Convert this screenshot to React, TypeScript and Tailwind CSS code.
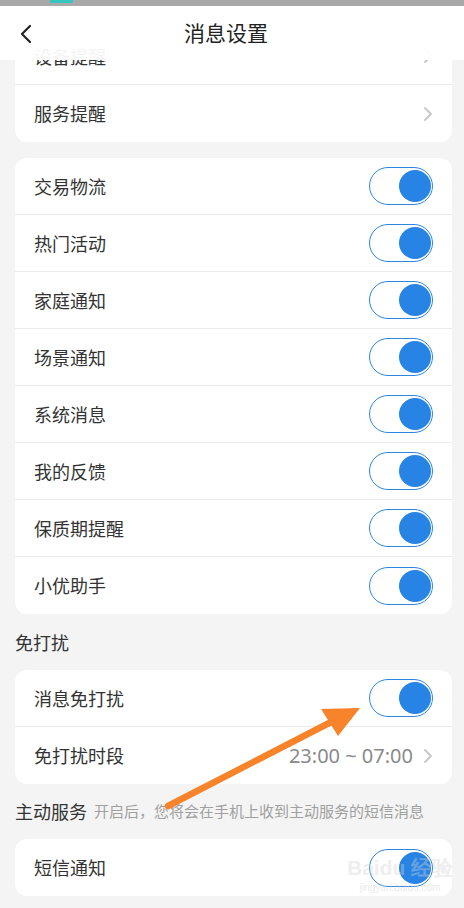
import React from "react";

const notices = ["交易物流", "热门活动", "家庭通知", "场景通知", "系统消息", "我的反馈", "保质期提醒", "小优助手"];

const Toggle = () => (
  <div className="w-[64px] h-[38px] rounded-full border-[1.5px] border-[#2a86e2] bg-white flex items-center justify-end pr-[1px]">
    <div className="w-[32px] h-[32px] rounded-full bg-[#2884e4]" />
  </div>
);

const Chevron = () => (
  <svg width="10" height="16" viewBox="0 0 10 16" fill="none">
    <path d="M2 2l6 6-6 6" stroke="#c6c6c6" strokeWidth="1.8" strokeLinecap="round" strokeLinejoin="round" />
  </svg>
);

const Row = ({ label, last, children }: { label: string; last?: boolean; children?: React.ReactNode }) => (
  <div className={`h-[57px] flex items-center justify-between pl-[19px] pr-[19px] ${last ? "" : "border-b border-[#ececec]"}`}>
    <span className="text-[18px] text-[#333]">{label}</span>
    {children}
  </div>
);

export default function App() {
  return (
    <div
      className="relative w-[464px] h-[908px] overflow-hidden bg-[#f4f4f4]"
      style={{ fontFamily: '"Noto Sans CJK SC", "Noto Sans", sans-serif' }}
    >
      {/* status bar strip */}
      <div className="h-[6px] bg-[#a9a9a9] relative">
        <div className="absolute left-[50px] top-0 w-[23px] h-[3px] bg-[#36c6c0]" />
      </div>

      <div className="pl-[15px] pr-[12px] pt-[22px] flex flex-col">
        <div className="bg-white rounded-[12px]">
          <Row label="设备提醒">
            <Chevron />
          </Row>
          <Row label="服务提醒" last>
            <Chevron />
          </Row>
        </div>

        <div className="bg-white rounded-[12px] mt-[16px]">
          {notices.map((n, i) => (
            <Row key={n} label={n} last={i === notices.length - 1}>
              <Toggle />
            </Row>
          ))}
        </div>

        <div className="h-[56px] flex items-center text-[18px] text-[#333]">免打扰</div>

        <div className="bg-white rounded-[12px]">
          <Row label="消息免打扰">
            <Toggle />
          </Row>
          <Row label="免打扰时段" last>
            <div className="flex items-center gap-[10px]">
              <span className="text-[20px] text-[#8a8a8a]" style={{ fontFamily: '"Noto Sans", sans-serif' }}>
                23:00 ~ 07:00
              </span>
              <Chevron />
            </div>
          </Row>
        </div>

        <div className="h-[55px] flex items-center gap-[7px]">
          <span className="text-[18px] text-[#333]">主动服务</span>
          <span className="text-[15px] text-[#a0a0a0]">开启后，您将会在手机上收到主动服务的短信消息</span>
        </div>

        <div className="bg-white rounded-[12px]">
          <Row label="短信通知" last>
            <Toggle />
          </Row>
        </div>
      </div>

      {/* header over content */}
      <div className="absolute left-0 right-0 top-[6px] h-[54px] bg-white/95 flex items-center justify-center pr-[12px]">
        <svg className="absolute left-[19px] top-[18px]" width="14" height="20" viewBox="0 0 14 20" fill="none">
          <path d="M11 2L3 10l8 8" stroke="#222" strokeWidth="2.2" strokeLinecap="round" strokeLinejoin="round" />
        </svg>
        <span className="text-[21px] text-[#222]">消息设置</span>
      </div>

      {/* annotation arrow */}
      <svg className="absolute left-0 top-0 pointer-events-none" width="464" height="908">
        <line x1="168" y1="806" x2="335" y2="720" stroke="#f7842b" strokeWidth="6.5" strokeLinecap="round" />
        <polygon points="360,708 321,709 338,736" fill="#f7842b" />
      </svg>

      {/* watermark */}
      <div className="absolute left-[347px] top-[857px] flex flex-col items-center pointer-events-none">
        <span className="text-[21px] font-bold text-[#d4d4d4]/40 leading-none" style={{ fontFamily: '"Liberation Sans", sans-serif' }}>
          Baidu 经验
        </span>
        <span className="text-[10px] text-[#d4d4d4]/50 leading-none mt-[5px]" style={{ fontFamily: '"Liberation Sans", sans-serif' }}>
          jingyan.baidu.com
        </span>
      </div>
    </div>
  );
}
